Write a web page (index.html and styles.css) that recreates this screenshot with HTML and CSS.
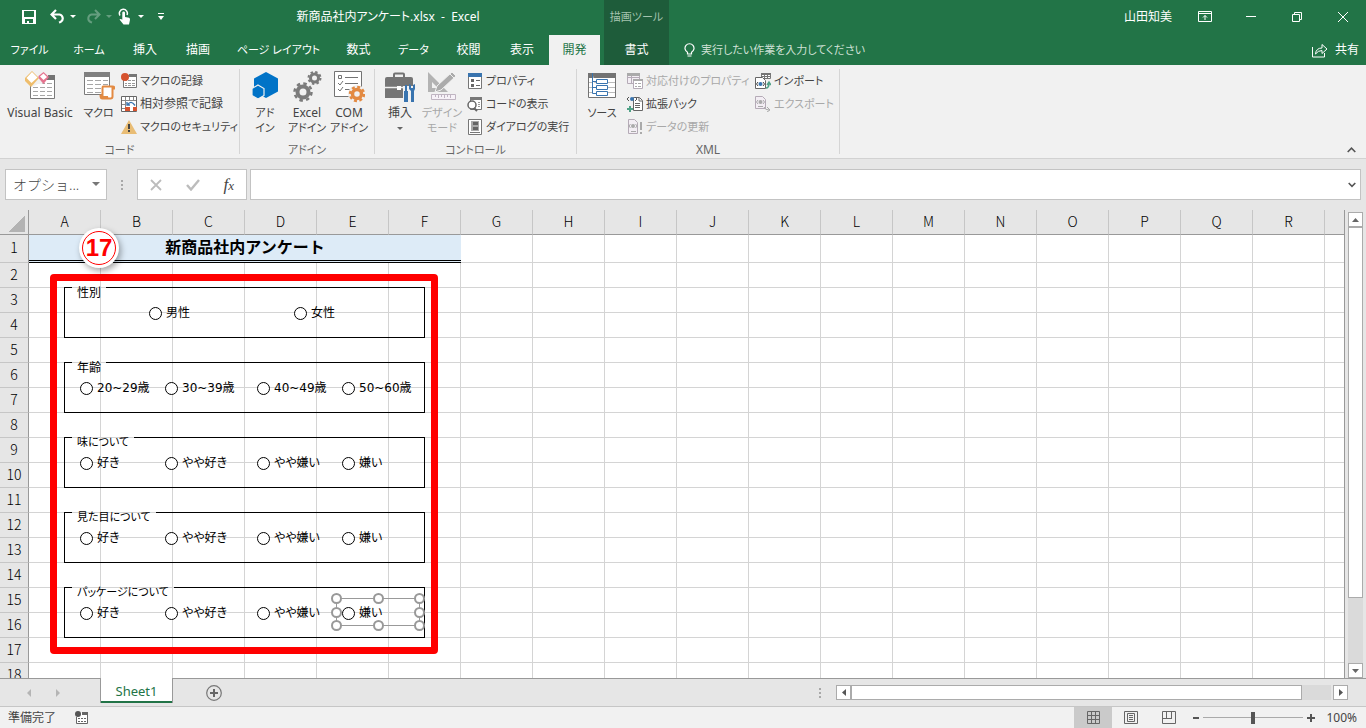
FILE: index.html
```
<!DOCTYPE html>
<html lang="ja">
<head>
    <meta charset="UTF-8">
    <meta name="viewport" content="width=device-width, initial-scale=1.0">
    <title>新商品社内アンケート.xlsx - Excel</title>
    <link rel="stylesheet" href="styles.css">
</head>
<body>
    <header class="header">
        <div class="titlebar">
            <div class="quick">
                <button class="quick-btn" aria-label="上書き保存">
                    <svg width="14" height="15" viewBox="0 0 14 15"><path d="M0 1h14v14H0z" fill="#fff"/><path d="M2 2h10v6H2zM3 10h8v4H3z" fill="#227447"/><path d="M5 12h2v3H5z" fill="#fff"/></svg>
                </button>
                <button class="quick-btn" aria-label="元に戻す">
                    <svg width="15" height="15" viewBox="0 0 15 15"><path d="M6 1L1.500 5.500 6 10M2 5.500h7.500a4 4 0 0 1 1 7.500L9 13.500" fill="none" stroke="#fff" stroke-width="2.200"/></svg>
                    <span class="caret"></span>
                </button>
                <button class="quick-btn faded" aria-label="やり直し">
                    <svg width="15" height="15" viewBox="0 0 15 15"><path d="M9 1l4.500 4.500L9 10M13 5.500H5.500a4 4 0 0 0-1 7.500L6 13.500" fill="none" stroke="#fff" stroke-width="2"/></svg>
                    <span class="caret"></span>
                </button>
                <button class="quick-btn touch" aria-label="タッチ/マウス モードの切り替え">
                    <svg width="14" height="17" viewBox="0 0 14 17"><path d="M2 7.500A4 4 0 1 1 9 7" fill="none" stroke="#fff" stroke-width="1.500"/><path d="M4.300 4.500a1.400 1.400 0 0 1 2.700 0V9l4 .8q1.200.4 1 2L11 16.500H5.500L1.500 11.500q1-1.300 2.800.2z" fill="#fff"/></svg>
                    <span class="caret"></span>
                </button>
                <button class="quick-btn" aria-label="クイック アクセス ツール バーのユーザー設定">
                    <svg width="6" height="7" viewBox="0 0 6 7"><path d="M0 0h6v1H0zM0 3h6L3 7z" fill="#fff"/></svg>
                </button>
            </div>
            <h1 class="doc-title">新商品社内アンケート.xlsx&nbsp; -&nbsp; Excel</h1>
            <div class="context-title tight">描画ツール</div>
            <div class="account">山田知美</div>
            <button class="win-btn" aria-label="リボンの表示オプション"><svg width="14" height="12" viewBox="0 0 14 12"><path d="M.5.5h13v10H.5zM1 2.500h12M7 9V4.500M5 6.500l2-2 2 2" fill="none" stroke="#fff"/></svg></button>
            <button class="win-btn" aria-label="最小化"><svg width="10" height="10" viewBox="0 0 10 10"><path d="M0 4.500h10" stroke="#fff"/></svg></button>
            <button class="win-btn" aria-label="元に戻す (縮小)"><svg width="10" height="10" viewBox="0 0 10 10"><path d="M.5 2.500h7v7h-7zM2.500 2V.5h7v7H8" fill="none" stroke="#fff"/></svg></button>
            <button class="win-btn" aria-label="閉じる"><svg width="10" height="10" viewBox="0 0 10 10"><path d="M0 0l10 10M10 0L0 10" stroke="#fff"/></svg></button>
        </div>
        <nav class="tabs">
            <a class="tab tight" href="#">ファイル</a>
            <a class="tab tight" href="#">ホーム</a>
            <a class="tab" href="#">挿入</a>
            <a class="tab" href="#">描画</a>
            <a class="tab tight" href="#">ページ レイアウト</a>
            <a class="tab" href="#">数式</a>
            <a class="tab tight" href="#">データ</a>
            <a class="tab" href="#">校閲</a>
            <a class="tab" href="#">表示</a>
            <a class="tab active" href="#">開発</a>
            <a class="tab context" href="#">書式</a>
            <label class="tellme tight">
                <svg width="11" height="15" viewBox="0 0 11 15"><path d="M3.500 11V9.300a4.500 4.500 0 1 1 4 0V11zM3.500 13h4" fill="none" stroke="#fff" stroke-width="1.200"/></svg>
                <input type="text" aria-label="操作アシスト" placeholder="実行したい作業を入力してください">
            </label>
            <button class="share">
                <svg width="16" height="15" viewBox="0 0 16 15"><path d="M.5 4v10h12v-4" fill="none" stroke="#fff"/><path d="M3.500 11Q4 5 10 5V1.500l5 4.500-5 4.500V7.500Q6 7.500 3.500 11z" fill="none" stroke="#fff"/></svg>
                共有
            </button>
        </nav>
    </header>

    <div class="ribbon">
        <section class="group group-code">
            <div class="tools">
                <button class="big">
                    <svg width="32" height="32" viewBox="0 0 32 32"><path d="M6.500 5.500h24v22h-24z" fill="#fff" stroke="#7a7a7a"/><path d="M6 4h25v5H6z" fill="#737373"/><path d="M9 12.500h5m2 0h5m2 0h5M9 16.500h5m2 0h5m2 0h5M9 20.500h5m2 0h5m2 0h5M9 24.500h5m2 0h5m2 0h5" stroke="#a6a6a6"/><path d="M0 0h24v6L18 13H14L8 16 0 9z" fill="#f1f1f1"/><path d="M8 0l7 7-8 9-6-6V7z" fill="#eebd6c"/><path d="M8 1l5.500 5.500L7.500 12 2.500 7z" fill="#fff"/><path d="M19.500 1l5.500 5-5.500 7-5-6V5z" fill="#e5738f"/><path d="M19.500 2.500L23 6l-3.500 3L16 5.500z" fill="#fff"/></svg>
                    Visual Basic
                </button>
                <button class="big tight">
                    <svg width="32" height="32" viewBox="0 0 32 32"><path d="M1.500 1.500h25v22h-25z" fill="#fff" stroke="#7a7a7a"/><path d="M1 1h26v5H1z" fill="#808080"/><path d="M4 9.500h6m2 0h6m2 0h5M4 13.500h6m2 0h6m2 0h5M4 17.500h6m2 0h6M4 21.500h6m2 0h6" stroke="#a6a6a6"/><path d="M20 15.500q-.5 0-.5 2v7h-2q0 3 2 3h8q2 0 2-2v-8h2q0-2-2-2z" fill="#fff" stroke="#e38a42" stroke-width="2"/><path d="M17 25h8q0 3 2 3h-8q-2 0-2-3z" fill="#e38a42"/></svg>
                    マクロ
                </button>
                <div class="small-list">
                    <button class="small tight"><svg width="16" height="16" viewBox="0 0 16 16"><path d="M2.500 2.500h13v12h-13z" fill="#fff" stroke="#777"/><path d="M8 1h8v3H8z" fill="#777"/><path d="M4 7.500h2m1 0h3m1 0h3M4 10.500h2m1 0h3m1 0h3M4 12.500h2m1 0h3m1 0h3" stroke="#999"/><circle cx="4" cy="4" r="4" fill="#d6532f"/></svg>マクロの記録</button>
                    <button class="small"><svg width="16" height="16" viewBox="0 0 16 16"><path d="M.5.5h15v15H.5z" fill="#fff" stroke="#666"/><path d="M1 4.500h14M4.500 1v14M1 8.500h3M1 12.500h3M8.500 1v3M12.500 1v14" stroke="#888"/><path d="M4 11h5v4H4zM12 11h4v4h-4z" fill="#d6532f"/><path d="M5 5h10v6H5z" fill="#fff"/><path d="M6 6v3h3M6.500 9Q10 3.500 14 9.500" fill="none" stroke="#3974af" stroke-width="1.400"/></svg>相対参照で記録</button>
                    <button class="small tight"><svg width="16" height="16" viewBox="0 0 16 16"><path d="M8 1L16 15H0z" fill="#e9bd75"/><path d="M7 5h2v5H7zM7 11h2v2H7z" fill="#444"/></svg>マクロのセキュリティ</button>
                </div>
            </div>
            <h2 class="group-name">コード</h2>
        </section>

        <section class="group group-addin">
            <div class="tools">
                <button class="big tight">
                    <svg width="32" height="32" viewBox="0 0 32 32"><path d="M17 1l12 6.500v13L17 27 5 20.500v-13z" fill="#0173c7"/><path d="M9 14l6 3.500v7L9 28l-6-3.500v-7z" fill="#0173c7" stroke="#f1f1f1" stroke-width="1.200"/></svg>
                    アド<br>イン
                </button>
                <button class="big tight">
                    <svg width="32" height="32" viewBox="0 0 32 32" fill="none" stroke="#7b7b7b"><circle cx="12" cy="21" r="5.500" stroke-width="4"/><circle cx="12" cy="21" r="8.500" stroke-width="2.500" stroke-dasharray="3.500 3.180"/><circle cx="23.500" cy="7" r="4" stroke-width="3"/><circle cx="23.500" cy="7" r="6" stroke-width="2" stroke-dasharray="2.400 2.310"/></svg>
                    <span class="latin">Excel</span><br>アドイン
                </button>
                <button class="big tight">
                    <svg width="32" height="32" viewBox="0 0 32 32"><path d="M1.500.5h27v25h-27z" fill="#fff" stroke="#737373"/><path d="M5.500 4.500h3v3h-3zM12 6.500h13M12 12.500h13M12 18.500h5M5 12l2 2 3-4M5 18l2 2 3-4" fill="none" stroke="#737373"/><circle cx="24" cy="23" r="9" fill="#f1f1f1"/><g fill="none" stroke="#e38a42"><circle cx="24" cy="23" r="4.500" stroke-width="3.500"/><circle cx="24" cy="23" r="7" stroke-width="2.500" stroke-dasharray="3 2.500"/></g></svg>
                    <span class="latin">COM</span><br>アドイン
                </button>
            </div>
            <h2 class="group-name">アドイン</h2>
        </section>

        <section class="group group-control">
            <div class="tools">
                <button class="big">
                    <svg width="32" height="32" viewBox="0 0 32 32"><path d="M10 6V3.500q0-1 1-1h8q1 0 1 1V6" fill="none" stroke="#737373" stroke-width="2"/><path d="M3 6h24q2 0 2 2v19H1V8q0-2 2-2z" fill="#757575"/><path d="M1 16.500h12m4 0h12" stroke="#f1f1f1" stroke-width="1.500"/><path d="M13 15h4v4h-4z" fill="#fff"/><path d="M19 15h12v17H19z" fill="#f1f1f1"/><path d="M21 14h2v6h-2zM20 20h4v11h-4zM25 13v5l2 2v11h3V20l1-2v-5l-2 1v3h-2v-3z" fill="#3974af"/></svg>
                    挿入<br><span class="drop"></span>
                </button>
                <button class="big tight" disabled>
                    <svg width="32" height="32" viewBox="0 0 32 32"><path d="M2 1l20 20H2zM6 11v6h6z" fill="#b3b3b3" fill-rule="evenodd"/><path d="M9 21l2-6L26 1l4 4-15 14z" fill="#ababab" stroke="#f1f1f1"/><path d="M24 3l4 4" stroke="#f1f1f1"/><path d="M5.500 23.500h24v5h-24zM9.500 24v2m3-2v3m3-3v2m3-2v3m3-3v2m3-2v3" fill="#f7f2f8" stroke="#c0b5c2"/></svg>
                    デザイン<br>モード
                </button>
                <div class="small-list">
                    <button class="small tight"><svg width="16" height="16" viewBox="0 0 16 16"><path d="M1.500.5h13v15h-13z" fill="#fff" stroke="#777"/><path d="M1 0h14v4H1z" fill="#3974af"/><path d="M4 6h3v3H4zM4 11h3v3H4z" fill="#666"/><path d="M9 7.500h4M9 12.500h4" stroke="#666"/></svg>プロパティ</button>
                    <button class="small tight"><svg width="16" height="16" viewBox="0 0 16 16"><path d="M3.500 1.500h11v12h-11z" fill="#fff" stroke="#777"/><path d="M3 1h12v3H3z" fill="#777"/><path d="M11 6.500h2M11 8.500h2M11 10.500h2" stroke="#999"/><circle cx="5" cy="9" r="4" fill="#fff" stroke="#666" stroke-width="1.500"/><path d="M7 12l3 3" stroke="#666" stroke-width="2"/></svg>コードの表示</button>
                    <button class="small tight"><svg width="16" height="16" viewBox="0 0 16 16"><path d="M1.500.5h13v15h-13z" fill="#fff" stroke="#777"/><path d="M4 2h8v10H4z" fill="#aaa"/><path d="M6 3h5v3H6zM6 8h5v3H6z" fill="#666"/><path d="M3 13.500h10" stroke="#777"/></svg>ダイアログの実行</button>
                </div>
            </div>
            <h2 class="group-name">コントロール</h2>
        </section>

        <section class="group group-xml">
            <div class="tools">
                <button class="big tight">
                    <svg width="32" height="32" viewBox="0 0 32 32"><path d="M2.500 2.500h27v24h-27z" fill="#fff" stroke="#737373"/><path d="M2 2h28v5H2z" fill="#737373"/><path d="M3 11.500h26M3 16.500h26M3 21.500h26" stroke="#bbb"/><path d="M6.500 2v20.500h4M6.500 10.500h4M6.500 16.500h4M10.500 8.500h11v4h-11zM10.500 14.500h11v4h-11zM10.500 20.500h11v4h-11z" fill="#fff" stroke="#3974af"/></svg>
                    ソース
                </button>
                <div class="small-list">
                    <button class="small tight" disabled><svg width="16" height="16" viewBox="0 0 16 16"><path d="M.5.5h12v10H.5zM1 4.500h11M4.500 3v7" fill="#f3eef4" stroke="#b5abb7"/><path d="M0 0h13v3H0z" fill="#aaa"/><path d="M6.500 6.500h9v9h-9z" fill="#fff" stroke="#b5abb7"/><path d="M6 6h10v2H6zM8 10h2v1H8zM11 10h3v1h-3zM8 13h2v1H8zM11 13h3v1h-3z" fill="#aaa"/></svg>対応付けのプロパティ</button>
                    <button class="small tight"><svg width="16" height="16" viewBox="0 0 16 16"><path d="M6.500 1.500h6l3 3v10h-9z" fill="#fff" stroke="#666"/><path d="M12 2v3h3M8 7.500h5M8 9.500h5M8 11.500h5" fill="none" stroke="#666"/><circle cx="5" cy="3" r="2" fill="#3974af"/><path d="M2 1L0 3l2 2M8 1l2 2-2 2" fill="none" stroke="#555"/><path d="M0 12h6v2H0zM2 10h2v6H2z" fill="#4fa287"/></svg>拡張パック</button>
                    <button class="small tight" disabled><svg width="16" height="16" viewBox="0 0 16 16"><path d="M1.500.5h6l3 3v11h-9z" fill="#f3eef4" stroke="#b5abb7"/><circle cx="6" cy="7" r="2" fill="#aaa"/><path d="M3.500 5L2 7l1.500 2M8.500 5L10 7 8.500 9M4 12.500h5" fill="none" stroke="#aaa"/><path d="M13 3h2v8h-2zM13 13h2v2h-2z" fill="#aaa"/></svg>データの更新</button>
                </div>
                <div class="small-list">
                    <button class="small tight"><svg width="16" height="16" viewBox="0 0 16 16"><path d="M6.500.5h9v5h-9zM7 3.500h8M9.500 1v4M12.500 1v4" fill="#fff" stroke="#777"/><path d="M6 0h10v2H6z" fill="#777"/><path d="M.5 4.500h7l3 3v8H.5z" fill="#fff" stroke="#666"/><circle cx="5.500" cy="11" r="2" fill="#3974af"/><path d="M3 9l-1.500 2L3 13M8 9l1.500 2L8 13" fill="none" stroke="#444"/><path d="M11 15q3 0 3-5m-2 2l2-3 2 3" fill="none" stroke="#4fa287" stroke-width="1.500"/></svg>インポート</button>
                    <button class="small tight" disabled><svg width="16" height="16" viewBox="0 0 16 16"><path d="M.5.5h7l3 3v9H.5z" fill="#f3eef4" stroke="#b5abb7"/><circle cx="5.500" cy="6" r="2" fill="#aaa"/><path d="M3 4L1.500 6 3 8M8 4l1.500 2L8 8M3 10.500h5M9 11q1 3 5 3M12 11l3 3-3 2" fill="none" stroke="#aaa"/></svg>エクスポート</button>
                </div>
            </div>
            <h2 class="group-name">XML</h2>
        </section>
        <button class="collapse" aria-label="リボンを折りたたむ"><svg width="9" height="6" viewBox="0 0 9 6"><path d="M.7 5L4.500 1.200 8.300 5" fill="none" stroke="#555" stroke-width="1.600"/></svg></button>
    </div>

    <div class="formula-bar">
        <div class="name-box">
            <select aria-label="名前ボックス"><option>オプショ...</option></select>
            <span class="caret"></span>
        </div>
        <svg class="grip" width="2" height="10" viewBox="0 0 2 10"><path d="M0 0h2v2H0zM0 4h2v2H0zM0 8h2v2H0z" fill="#a8a8a8"/></svg>
        <div class="fx-box">
            <button aria-label="キャンセル"><svg width="12" height="12" viewBox="0 0 12 12"><path d="M1 1l10 10M11 1L1 11" stroke="#bcbcbc" stroke-width="1.800"/></svg></button>
            <button aria-label="入力"><svg width="14" height="12" viewBox="0 0 14 12"><path d="M1 6l4 4.500L13 1" fill="none" stroke="#bcbcbc" stroke-width="2.400"/></svg></button>
            <button class="fx" aria-label="関数の挿入">f<small>x</small></button>
        </div>
        <div class="formula-box">
            <input type="text" aria-label="数式バー">
            <svg width="8" height="6" viewBox="0 0 8 6"><path d="M.7 1L4 4.300 7.300 1" fill="none" stroke="#555" stroke-width="1.600"/></svg>
        </div>
    </div>

    <main class="workspace">
        <div class="sheet" id="sheet">
            <table class="grid">
                <thead><tr id="letters"><th class="corner"></th></tr></thead>
                <tbody id="rows">
                    <tr class="title-row" id="titleRow"><th>1</th><td class="sheet-title" colspan="6">新商品社内アンケート</td></tr>
                </tbody>
            </table>

            <form class="survey">
                <fieldset class="question two">
                    <legend>性別</legend>
                    <div class="options">
                        <label><input type="radio" name="sex">男性</label>
                        <label><input type="radio" name="sex">女性</label>
                    </div>
                </fieldset>
                <fieldset class="question">
                    <legend>年齢</legend>
                    <div class="options">
                        <label><input type="radio" name="age">20~29歳</label>
                        <label><input type="radio" name="age">30~39歳</label>
                        <label><input type="radio" name="age">40~49歳</label>
                        <label><input type="radio" name="age">50~60歳</label>
                    </div>
                </fieldset>
                <fieldset class="question">
                    <legend class="tight">味について</legend>
                    <div class="options">
                        <label><input type="radio" name="taste">好き</label>
                        <label><input type="radio" name="taste">やや好き</label>
                        <label><input type="radio" name="taste">やや嫌い</label>
                        <label><input type="radio" name="taste">嫌い</label>
                    </div>
                </fieldset>
                <fieldset class="question">
                    <legend class="tight">見た目について</legend>
                    <div class="options">
                        <label><input type="radio" name="look">好き</label>
                        <label><input type="radio" name="look">やや好き</label>
                        <label><input type="radio" name="look">やや嫌い</label>
                        <label><input type="radio" name="look">嫌い</label>
                    </div>
                </fieldset>
                <fieldset class="question">
                    <legend class="tight">パッケージについて</legend>
                    <div class="options">
                        <label><input type="radio" name="package">好き</label>
                        <label><input type="radio" name="package">やや好き</label>
                        <label><input type="radio" name="package">やや嫌い</label>
                        <label><input type="radio" name="package">嫌い</label>
                    </div>
                </fieldset>
            </form>

            <!-- 選択ハンドル -->
            <svg class="handles" width="96" height="40" viewBox="0 0 96 40">
                <path d="M6.500 6.500h83v27h-83z" fill="none" stroke="#999"/>
                <g fill="#fff" stroke="#999" stroke-width="2">
                    <circle cx="6.500" cy="6.500" r="4.500"/><circle cx="48.500" cy="6.500" r="4.500"/><circle cx="89.500" cy="6.500" r="4.500"/>
                    <circle cx="6.500" cy="20.500" r="4.500"/><circle cx="89.500" cy="20.500" r="4.500"/>
                    <circle cx="6.500" cy="33.500" r="4.500"/><circle cx="48.500" cy="33.500" r="4.500"/><circle cx="89.500" cy="33.500" r="4.500"/>
                </g>
            </svg>
            <div class="frame"></div>
            <div class="badge"><span>17</span></div>
        </div>
        <div class="vscroll">
            <button aria-label="上へ"><svg width="7" height="4" viewBox="0 0 7 4"><path d="M0 4h7L3.500 0z" fill="#666"/></svg></button>
            <div class="vthumb"></div>
            <div class="vtrack"></div>
            <button aria-label="下へ"><svg width="7" height="4" viewBox="0 0 7 4"><path d="M0 0h7L3.500 4z" fill="#666"/></svg></button>
        </div>
    </main>

    <div class="sheet-bar">
        <div class="sheet-nav">
            <button aria-label="前のシート"><svg width="4" height="8" viewBox="0 0 4 8"><path d="M4 0v8L0 4z" fill="#b5b5b5"/></svg></button>
            <button aria-label="次のシート"><svg width="4" height="8" viewBox="0 0 4 8"><path d="M0 0v8l4-4z" fill="#b5b5b5"/></svg></button>
        </div>
        <a class="sheet-tab" href="#">Sheet1</a>
        <button class="add-sheet" aria-label="新しいシート"><svg width="16" height="16" viewBox="0 0 16 16"><circle cx="8" cy="8" r="7.300" fill="none" stroke="#777" stroke-width="1.200"/><path d="M4 8h8M8 4v8" stroke="#666" stroke-width="2"/></svg></button>
        <svg class="grip" width="2" height="10" viewBox="0 0 2 10"><path d="M0 0h2v2H0zM0 4h2v2H0zM0 8h2v2H0z" fill="#a8a8a8"/></svg>
        <div class="hscroll">
            <button aria-label="左へ"><svg width="4" height="7" viewBox="0 0 4 7"><path d="M4 0v7L0 3.500z" fill="#555"/></svg></button>
            <div class="hthumb"></div>
            <div class="htrack"></div>
            <button aria-label="右へ"><svg width="4" height="7" viewBox="0 0 4 7"><path d="M0 0v7l4-3.500z" fill="#555"/></svg></button>
        </div>
    </div>

    <footer class="status">
        <span class="ready">準備完了</span>
        <button aria-label="マクロの記録"><svg width="13" height="13" viewBox="0 0 13 13"><path d="M1.500 6v6.500h11v-11H7" fill="#fff" stroke="#666"/><path d="M7 1h6v3H7z" fill="#666"/><path d="M3 7.500h2m1 0h2m1 0h2M3 10.500h2m1 0h2m1 0h2" stroke="#666"/><circle cx="3" cy="3" r="3" fill="#555"/></svg></button>
        <div class="views">
            <button class="on" aria-label="標準"><svg width="13" height="13" viewBox="0 0 13 13"><path d="M.5.5h12v12H.5zM4.500 0v13M8.500 0v13M0 4.500h13M0 8.500h13" fill="none" stroke="#666"/></svg></button>
            <button aria-label="ページ レイアウト"><svg width="14" height="13" viewBox="0 0 14 13"><path d="M.5.5h13v12H.5zM3.500 2.500h7v8h-7zM5 4.500h4M5 6.500h4M5 8.500h4" fill="none" stroke="#666"/></svg></button>
            <button aria-label="改ページ プレビュー"><svg width="14" height="13" viewBox="0 0 14 13"><path d="M.5.5h13v12H.5zM4.500 1v6M9.500 1v6M1 7.500h9" fill="none" stroke="#666"/></svg></button>
        </div>
        <button class="zoom-btn" aria-label="縮小"><svg width="8" height="8" viewBox="0 0 8 8"><path d="M1 4h6" stroke="#555" stroke-width="2"/></svg></button>
        <input class="zoom" type="range" min="0" max="200" value="100" aria-label="ズーム">
        <button class="zoom-btn" aria-label="拡大"><svg width="8" height="8" viewBox="0 0 8 8"><path d="M0 4h8M4 0v8" stroke="#555" stroke-width="2"/></svg></button>
        <span class="percent">100%</span>
    </footer>

    <script>
        // ウィンドウに入る分だけ列と行を作る
        var sheet = document.getElementById('sheet');
        var cols = Math.max(6, Math.ceil((sheet.clientWidth - 29) / 72));
        var count = Math.ceil((sheet.clientHeight - 53) / 25);

        for (var c = 0; c < cols; c++) {
            var th = document.createElement('th');
            // 右端で切れる列には文字を出さない
            if (29 + c * 72 + 44 < sheet.clientWidth) {
                th.textContent = String.fromCharCode(65 + c % 26);
            }
            document.getElementById('letters').appendChild(th);
        }
        for (var i = 6; i < cols; i++) {
            document.getElementById('titleRow').insertCell();
        }
        for (var r = 2; r <= count + 1; r++) {
            var tr = document.createElement('tr');
            tr.innerHTML = '<th>' + r + '</th>' + '<td></td>'.repeat(cols);
            document.getElementById('rows').appendChild(tr);
        }
    </script>
</body>
</html>
```
FILE: styles.css
```
* { box-sizing: border-box; }
body {
    margin: 0;
    height: 100vh;
    display: flex;
    flex-direction: column;
    overflow: hidden;
    background: #e6e6e6;
    color: #444;
    font-family: "Noto Sans", "Noto Sans CJK JP", sans-serif;
    font-size: 12px;
    line-height: 15px;
    font-feature-settings: "palt";
}
button, input, select {
    font: inherit;
    font-feature-settings: inherit;
    color: inherit;
    border: 0;
    padding: 0;
    margin: 0;
    background: none;
}
a { color: inherit; text-decoration: none; }
h1, h2 { margin: 0; font-size: 12px; font-weight: 400; }
svg { display: block; flex: none; }
.tight { font-size: 11px; }
.latin { font-size: 12px; }
.caret {
    border: 3px solid transparent;
    border-top-color: currentColor;
    border-bottom: 0;
}

/* header */
.header { background: #227447; color: #fff; }
.titlebar { display: flex; align-items: center; height: 33px; }
.quick {
    display: flex;
    align-items: center;
    gap: 10px;
    width: 172px;
    padding-left: 22px;
}
.quick-btn { display: flex; align-items: center; gap: 5px; }
.quick-btn:first-child { margin-right: 4px; }
.quick-btn.touch { gap: 6px; margin-left: -4px; }
.quick-btn:last-child { margin-left: 4px; }
.faded { opacity: .3; }
.doc-title { flex: 0 0 432px; text-align: center; }
.context-title {
    width: 65px;
    line-height: 33px;
    text-align: center;
    background: #1e5c3a;
    color: #a3c3ae;
}
.account { margin-left: auto; padding-right: 10px; }
.win-btn { width: 46px; height: 33px; display: grid; place-items: center; }
.tabs {
    display: grid;
    grid-template-columns: 59px 60px 52px 54px 107px 53px 57px 53px 54px 51px 69px 1fr auto;
    height: 32px;
    line-height: 34px;
}
.tab { text-align: center; white-space: nowrap; height: 32px; }
.tab.active { background: #f1f1f1; color: #227447; margin-top: 2px; height: 30px; line-height: 30px; }
.tab.context { background: #1e5c3a; margin-left: 4px; }
.tellme { display: flex; align-items: center; gap: 6px; padding-left: 15px; }
.tellme input { flex: 1; max-width: 240px; }
.tellme input::placeholder { color: #cfe0d5; opacity: 1; }
.share { display: flex; align-items: center; gap: 7px; padding-right: 7px; }

/* ribbon */
.ribbon {
    display: flex;
    height: 94px;
    background: #f1f1f1;
    border-bottom: 1px solid #d2d2d2;
}
.group {
    display: flex;
    flex-direction: column;
    margin: 4px 0;
    border-right: 1px solid #d5d5d5;
}
.group-code { width: 240px; }
.group-addin { width: 135px; }
.group-control { width: 202px; }
.group-xml { width: 263px; }
.tools { display: flex; flex: none; height: 73px; }
.group-name { text-align: center; color: #666; font-size: 11px; }
.group-xml .group-name { font-size: 12px; }
.big {
    align-self: flex-start;
    flex: none;
    width: 42px;
    padding-top: 2px;
    white-space: nowrap;
}
.big svg { margin: 0 auto 2px; }
.group-code .big:first-child { width: 80px; }
.group-code .big { width: 37px; }
.group-addin .tools { padding-left: 4px; }
.group-control .tools { padding-left: 4px; }
.group-xml .big { width: 50px; }
.drop {
    display: inline-block;
    vertical-align: middle;
    border: 3px solid transparent;
    border-top-color: #666;
    border-bottom: 0;
}
.small-list { display: flex; flex-direction: column; flex: none; padding-left: 4px; }
.group-xml .small-list { padding-left: 0; width: 128px; }
.small {
    display: flex;
    align-items: center;
    gap: 3px;
    height: 23px;
    white-space: nowrap;
}
.big:disabled, .small:disabled { color: #a8a8a8; }
.collapse { margin: auto 10px 5px auto; }

/* formula bar */
.formula-bar {
    display: flex;
    align-items: center;
    padding: 10px 5px;
    height: 51px;
}
.name-box, .fx-box, .formula-box {
    display: flex;
    align-items: center;
    height: 31px;
    background: #fff;
    border: 1px solid #c3c3c3;
}
.name-box { position: relative; width: 102px; }
.name-box select {
    appearance: none;
    width: 100%;
    height: 29px;
    padding-left: 7px;
    font-size: 14px;
    font-weight: 300;
    font-feature-settings: normal;
}
.name-box .caret {
    position: absolute;
    right: 6px;
    top: 12px;
    border-width: 4px 4px 0;
    color: #777;
    pointer-events: none;
}
.formula-bar .grip { margin: 0 14px; }
.fx-box { width: 110px; justify-content: space-around; margin-right: 3px; }
.fx { font: italic 17px "Liberation Serif", serif; }
.fx small { font-size: 13px; }
.formula-box { flex: 1; padding-right: 4px; }
.formula-box input { flex: 1; height: 29px; padding: 0 6px; }

/* sheet */
.workspace { flex: 1; display: flex; min-height: 0; }
.sheet {
    flex: 1;
    position: relative;
    overflow: hidden;
    background: #fff;
    border-right: 1px solid #999;
}
.grid {
    width: max-content;
    table-layout: fixed;
    border-collapse: separate;
    border-spacing: 0;
    font-family: "Noto Sans CJK JP", sans-serif;
    color: #000;
}
.grid th, .grid td { width: 72px; min-width: 72px; height: 25px; padding: 0; }
.grid td { border-right: 1px solid #d4d4d4; border-bottom: 1px solid #d4d4d4; }
.grid th {
    background: #e6e6e6;
    padding-bottom: 2px;
    font-size: 14px;
    font-weight: 300;
    line-height: 20px;
    border-right: 1px solid #c6c6c6;
    border-bottom: 1px solid #999;
}
.grid tbody th, .grid .corner {
    width: 29px;
    min-width: 29px;
    border-right-color: #999;
    border-bottom-color: #c6c6c6;
}
.grid .corner {
    border-color: #999;
    background: linear-gradient(135deg, transparent 50%, #b3b3b3 50%) 8px 5px / 17px 17px no-repeat #e6e6e6;
}
.grid .title-row th, .grid .title-row td { height: 28px; padding-bottom: 4px; }
.grid .sheet-title {
    background: #ddebf7;
    border-right: 0;
    border-bottom: 3px double #000;
    text-align: center;
    font-size: 16px;
    font-weight: 700;
    line-height: 20px;
    font-feature-settings: normal;
}

/* floating shapes */
.survey {
    position: absolute;
    left: 64px;
    top: 65px;
    width: 361px;
    display: flex;
    flex-direction: column;
    gap: 12px;
    font-family: "DejaVu Sans", "Noto Sans CJK JP", sans-serif;
    color: #000;
}
.question {
    height: 63px;
    margin: 0;
    padding: 0 0 0 15px;
    border: 1px solid #000;
    min-width: 0;
}
.question legend {
    margin-left: -8px;
    padding: 12px 5px 0;
    line-height: 12px;
}
.options {
    display: grid;
    grid-template-columns: 85px 92px 85px 1fr;
    height: 28px;
}
.two .options { grid-template-columns: 145px 1fr; padding-left: 69px; }
.options label { display: flex; align-items: center; gap: 4px; white-space: nowrap; }
.options input {
    appearance: none;
    width: 13px;
    height: 13px;
    border: 1px solid #000;
    border-radius: 50%;
    background: #fff;
}
.handles { position: absolute; left: 330px; top: 382px; }
.frame {
    position: absolute;
    left: 50px;
    top: 64px;
    width: 388px;
    height: 380px;
    border: 7px solid #f00;
    border-radius: 4px;
    pointer-events: none;
}
.badge {
    position: absolute;
    left: 79px;
    top: 18px;
    width: 40px;
    height: 40px;
    padding: 3px;
    border-radius: 50%;
    background: #fff;
    box-shadow: 2px 3px 6px rgba(0,0,0,0.35);
}
.badge span {
    display: block;
    height: 34px;
    border: 1px solid #f00;
    border-radius: 50%;
    color: #f00;
    font: bold 24px/32px "Liberation Sans", sans-serif;
    text-align: center;
}

/* scrollbars */
.vscroll {
    display: flex;
    flex-direction: column;
    width: 21px;
    padding: 2px 3px 0;
}
.vscroll button, .hscroll button {
    display: grid;
    place-items: center;
    width: 15px;
    height: 15px;
    background: #fff;
    border: 1px solid #ababab;
    flex: none;
}
.vthumb { flex: 85; width: 15px; background: #fff; border: 1px solid #ababab; }
.vtrack { flex: 15; width: 15px; background: #dadada; }

/* sheet tabs */
.sheet-bar {
    display: flex;
    align-items: center;
    height: 28px;
    border-top: 1px solid #999;
}
.sheet-nav { display: flex; gap: 25px; width: 100px; padding-left: 27px; }
.sheet-tab {
    align-self: flex-start;
    width: 73px;
    height: 25px;
    margin-top: -1px;
    line-height: 26px;
    font-size: 13px;
    text-align: center;
    color: #227447;
    background: #fff;
    border: solid #999;
    border-width: 0 1px;
    box-shadow: inset 0 -2px #227447;
}
.add-sheet { margin-left: 33px; margin-right: auto; }
.hscroll {
    display: flex;
    flex: 0 1 512px;
    margin: 0 18px 0 15px;
}
.hthumb { flex: 94; background: #fff; border: 1px solid #ababab; }
.htrack { flex: 6; background: #dadada; margin-right: 2px; }

/* status bar */
.status {
    display: flex;
    align-items: center;
    height: 22px;
    background: #f1f1f1;
    border-top: 1px solid #c6c6c6;
    padding: 0 9px 0 8px;
}
.ready { margin-right: 19px; }
.views { display: flex; align-self: stretch; margin-left: auto; }
.views button { width: 38px; display: grid; place-items: center; }
.views .on { background: #cacaca; }
.zoom-btn { margin: 0 3px 0 4px; }
.zoom { appearance: none; width: 100px; height: 12px; }
.zoom::-webkit-slider-runnable-track {
    height: 12px;
    background: linear-gradient(#aaa, #aaa) center / 100% 1px no-repeat;
}
.zoom::-webkit-slider-thumb { appearance: none; width: 4px; height: 12px; background: #555; }
.percent { width: 31px; margin-left: 8px; text-align: right; }
```
